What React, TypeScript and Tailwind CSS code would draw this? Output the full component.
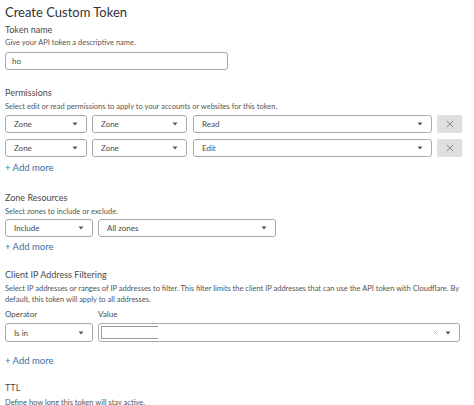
import React from 'react';

const font = { fontFamily: 'Lato, "Open Sans", sans-serif' };

function Caret() {
  return (
    <svg width="6" height="4" viewBox="0 0 6 4" className="shrink-0">
      <path d="M0.5 0.5h5L3 3.5z" fill="#555" />
    </svg>
  );
}

function Select({ value, className }: { value: string; className: string }) {
  return (
    <div
      className={`flex items-center justify-between rounded-[3px] border border-[#a9a9a9] bg-white pl-[8px] pr-[8px] text-[8px] text-[#4a4a4a] ${className}`}
    >
      <span>{value}</span>
      <Caret />
    </div>
  );
}

function AddMore({ className }: { className: string }) {
  return <div className={`text-[9.5px] leading-[12px] text-[#3d6fa3] ${className}`}>+ Add more</div>;
}

function RemoveButton() {
  return (
    <button type="button" className="flex h-[18px] w-[25px] items-center justify-center rounded-[2px] bg-[#dfdfdf]">
      <svg width="8" height="8" viewBox="0 0 8 8">
        <path d="M0.8 0.8l6.4 6.4M7.2 0.8l-6.4 6.4" stroke="#808080" strokeWidth="0.9" />
      </svg>
    </button>
  );
}

export default function App() {
  return (
    <div className="h-[405px] w-[474px] overflow-hidden bg-white pl-[5px] text-[#4a4a4a]" style={font}>
      <div className="pt-[3px] text-[13px] leading-[18px] text-[#333]">Create Custom Token</div>

      <div className="mt-[3px] text-[9px] leading-[12px]">Token name</div>
      <div className="mt-[1px] text-[7.5px] leading-[12px] text-[#555]">Give your API token a descriptive name.</div>
      <div className="mt-[3px] flex h-[18px] w-[223px] items-center rounded-[3px] border border-[#a9a9a9] pl-[6px] text-[8px]">
        ho
      </div>

      <div className="mt-[17px] text-[9px] leading-[12px]">Permissions</div>
      <div className="mt-[2px] text-[7.5px] leading-[12px] text-[#555]">
        Select edit or read permissions to apply to your accounts or websites for this token.
      </div>
      <div className="mt-[2px] flex flex-col gap-[6px]">
        {['Read', 'Edit'].map((p) => (
          <div key={p} className="flex items-center">
            <Select value="Zone" className="h-[18px] w-[82px]" />
            <Select value="Zone" className="ml-[5px] h-[18px] w-[95px]" />
            <Select value={p} className="ml-[6px] h-[18px] w-[239px]" />
            <div className="ml-[5px]">
              <RemoveButton />
            </div>
          </div>
        ))}
      </div>
      <AddMore className="mt-[5px]" />

      <div className="mt-[18px] text-[9px] leading-[12px]">Zone Resources</div>
      <div className="mt-[2px] text-[7.5px] leading-[12px] text-[#555]">Select zones to include or exclude.</div>
      <div className="mt-[1px] flex">
        <Select value="Include" className="h-[18px] w-[88px]" />
        <Select value="All zones" className="ml-[5px] h-[18px] w-[178px]" />
      </div>
      <AddMore className="mt-[4px]" />

      <div className="mt-[16px] text-[9px] leading-[12px]">Client IP Address Filtering</div>
      <div className="mt-[2px] w-[455px] text-[7.5px] leading-[11px] text-[#555]">
        Select IP addresses or ranges of IP addresses to filter. This filter limits the client IP addresses that can use the API token with Cloudflare. By default, this token will apply to all addresses.
      </div>
      <div className="mt-[3px] flex text-[8px] leading-[12px]">
        <div className="w-[93px]">Operator</div>
        <div>Value</div>
      </div>
      <div className="mt-[3px] flex">
        <Select value="Is in" className="h-[19px] w-[88px]" />
        <div className="ml-[5px] flex h-[19px] w-[362px] items-center rounded-[3px] border border-[#a9a9a9] bg-white pl-[2px] pr-[8px]">
          <div className="h-[13px] w-[57px] border-l border-t border-b border-[#999] bg-white" />
          <div className="ml-auto flex items-center gap-[7px]">
            <svg width="5" height="5" viewBox="0 0 5 5">
              <path d="M0.5 0.5l4 4M4.5 0.5l-4 4" stroke="#aaa" strokeWidth="0.7" />
            </svg>
            <Caret />
          </div>
        </div>
      </div>
      <AddMore className="mt-[13px]" />

      <div className="mt-[15px] text-[9px] leading-[12px]">TTL</div>
      <div className="mt-[3px] text-[7.5px] leading-[12px] text-[#555]">Define how long this token will stay active.</div>
    </div>
  );
}
